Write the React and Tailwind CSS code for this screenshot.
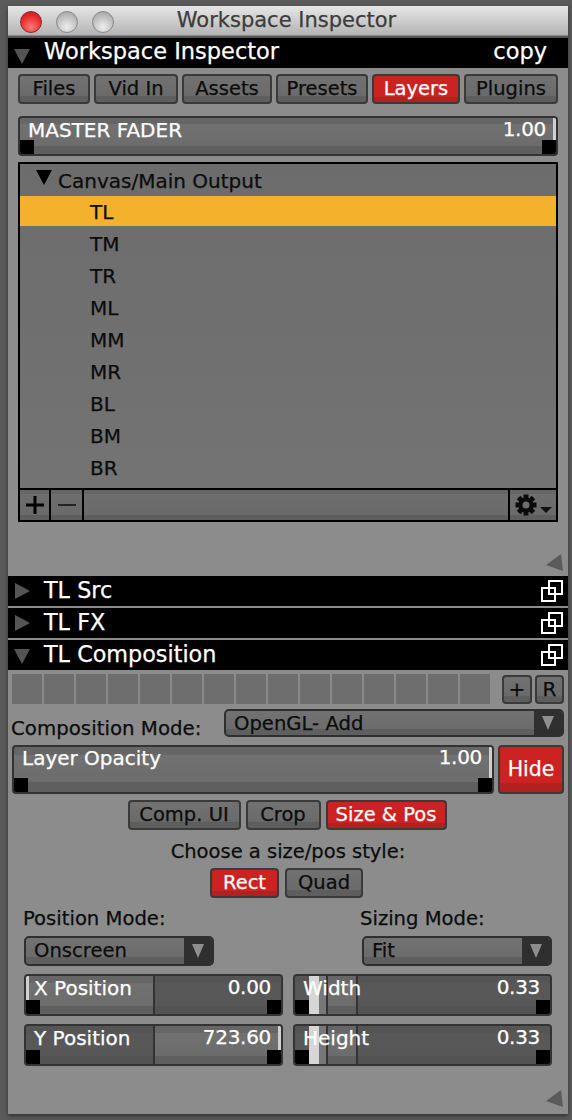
const font = { fontFamily: '"DejaVu Sans", sans-serif' };

function Btn({ children, w, red, h = "h-[30px]", text = "text-[19.5px]" }) {
  return (
    <div
      className={`${w} ${h} ${text} shrink-0 rounded-[4px] border-2 border-[#3a3a3a] flex items-center justify-center leading-none ${
        red
          ? "text-white bg-[linear-gradient(#cc2222_0%,#cc2222_80%,#b32020_80%,#b32020_100%)]"
          : "text-[#0c0c0c] bg-[linear-gradient(#727272_0%,#6a6a6a_78%,#5e5e5e_78%,#5e5e5e_100%)]"
      }`}
    >
      {children}
    </div>
  );
}

function Knob({ side }) {
  return <div className={`absolute bottom-0 ${side} w-[14px] h-[14px] bg-black`} />;
}

function Fader({ w, h, label, value, mark, raised, children }) {
  return (
    <div className={`${w} ${h} relative shrink-0 rounded-[4px] border-2 border-[#333] overflow-hidden bg-[linear-gradient(#666_0%,#666_18%,#717171_18%,#6c6c6c_78%,#5f5f5f_78%,#5f5f5f_100%)]`}>
      <div className="absolute inset-0 flex">{children}</div>
      <span className={`absolute left-[8px] text-white leading-[26px] text-[20px] ${raised ? "top-[-2px]" : "top-[-1px]"}`}>{label}</span>
      <span className={`absolute right-[10px] text-white leading-[26px] text-[20px] tracking-[-0.3px] ${raised ? "top-[-3px]" : "top-[-2px]"}`}>{value}</span>
      {mark === "right" && <div className="absolute right-0 top-0 w-[3px] bottom-[14px] bg-[#d0d0d0]" />}
      {mark === "left" && <div className="absolute left-0 top-0 w-[3px] bottom-[14px] bg-[#d0d0d0]" />}
      <Knob side="left-0" />
      <Knob side="right-0" />
    </div>
  );
}

function Select({ w, label, h = "h-[30px]" }) {
  return (
    <div className={`${w} ${h} shrink-0 rounded-[5px] border-2 border-[#2f2f2f] flex overflow-hidden bg-[linear-gradient(#727272_0%,#6c6c6c_75%,#5f5f5f_75%,#5f5f5f_100%)]`}>
      <div className="flex-1 pl-[8px] leading-[26px] text-[#0c0c0c] text-[19.6px]">{label}</div>
      <div className="w-[28px] bg-[#2f2f2f] flex items-center justify-center">
        <svg width="16" height="16" viewBox="0 0 16 16"><path d="M2 1H14L8 15Z" fill="#8e8e8e" /></svg>
      </div>
    </div>
  );
}

function Copy() {
  return (
    <svg width="22" height="22" viewBox="0 0 22 22" fill="none" stroke="white" strokeWidth="2">
      <rect x="8" y="1" width="13" height="13" />
      <rect x="1" y="8" width="13" height="13" />
    </svg>
  );
}

function Bar({ open, label }) {
  return (
    <div className="h-[30px] mb-[2px] bg-black flex items-center pl-[5px] pr-[5px]">
      <div className="w-[18px] h-[18px] flex items-center justify-center">
        {open ? (
          <svg width="18" height="18" viewBox="0 0 18 18"><path d="M1 3H17L9 18Z" fill="#555" /></svg>
        ) : (
          <svg width="18" height="18" viewBox="0 0 18 18"><path d="M2 1L17 9L2 17Z" fill="#555" /></svg>
        )}
      </div>
      <span className="ml-[13px] text-white text-[22.3px] leading-none flex-1 -mt-[2px]">{label}</span>
      <Copy />
    </div>
  );
}

function Corner() {
  return (
    <svg width="18" height="18" viewBox="0 0 18 18"><path d="M16 1L18 18L1 12Z" fill="#5b5b5b" /></svg>
  );
}

function Gear() {
  return (
    <svg width="22" height="22" viewBox="0 0 22 22">
      <g fill="#0a0a0a">
        {[0, 45, 90, 135].map((a) => (
          <rect key={a} x="8.5" y="0.5" width="5" height="21" transform={`rotate(${a} 11 11)`} />
        ))}
      </g>
      <circle cx="11" cy="11" r="7.5" fill="#0a0a0a" />
      <circle cx="11" cy="11" r="3.5" fill="#6c6c6c" />
    </svg>
  );
}

const rows = ["TM", "TR", "ML", "MM", "MR", "BL", "BM", "BR"];

export default function App() {
  return (
    <div style={font} className="w-[572px] h-[1120px] bg-[#5a5a5a] pt-[6px] pl-[8px] overflow-hidden [-webkit-text-stroke:0.25px]">
      <div className="w-[560px] h-[1108px] bg-[#8c8c8c] shadow-[0_2px_4px_#333]">
        {/* title bar */}
        <div className="h-[30px] relative flex items-center justify-center bg-[linear-gradient(#e6e6e6,#b4b4b4)] border-b border-[#8a8a8a] text-[#3c3c3c] text-[21px]">
          <div className="absolute left-[12px] top-[5px] flex gap-[14px]">
            <div className="w-[22px] h-[22px] rounded-full border border-[#8a2a2a] bg-[radial-gradient(circle_at_50%_75%,#ff7a7a,#e82a2a_60%,#b81818)]" />
            <div className="w-[22px] h-[22px] rounded-full border border-[#8a8a8a] bg-[radial-gradient(circle_at_50%_75%,#eeeeee,#bdbdbd_60%,#9a9a9a)]" />
            <div className="w-[22px] h-[22px] rounded-full border border-[#8a8a8a] bg-[radial-gradient(circle_at_50%_75%,#eeeeee,#bdbdbd_60%,#9a9a9a)]" />
          </div>
          <span className="pr-[3px] mt-[1px]">Workspace Inspector</span>
        </div>
        <div className="h-[2px] bg-[#555]" />
        {/* inspector header */}
        <div className="h-[30px] bg-black flex items-center pl-[5px] pr-[21px] text-white text-[22.5px]">
          <svg width="18" height="18" viewBox="0 0 18 18" className="mt-[3px]"><path d="M1 3H17L9 18Z" fill="#555" /></svg>
          <span className="ml-[13px] flex-1 leading-none -mt-[3px]">Workspace Inspector</span>
          <span className="leading-none -mt-[3px]">copy</span>
        </div>
        {/* tabs */}
        <div className="mt-[6px] pl-[10px] flex gap-[4px]">
          <Btn w="w-[72px]">Files</Btn>
          <Btn w="w-[84px]">Vid In</Btn>
          <Btn w="w-[90px]">Assets</Btn>
          <Btn w="w-[92px]">Presets</Btn>
          <Btn w="w-[88px]" red>Layers</Btn>
          <Btn w="w-[94px]">Plugins</Btn>
        </div>
        {/* master */}
        <div className="mt-[12px] pl-[10px]">
          <Fader w="w-[540px]" h="h-[40px]" label="MASTER FADER" value="1.00" mark="right" />
        </div>
        {/* list */}
        <div className="mt-[6px] ml-[10px] w-[540px] h-[360px] border-2 border-black bg-[linear-gradient(#6c6c6c,#747474)] flex flex-col text-[#0c0c0c] text-[20px]">
          <div className="h-[32px] flex items-center pl-[15px] shrink-0">
            <svg width="18" height="16" viewBox="0 0 18 16" className="-mt-[6px]"><path d="M1 1H17L9 16Z" fill="#000" /></svg>
            <span className="ml-[5px] mt-[2px]">Canvas/Main Output</span>
          </div>
          <div className="h-[30px] mb-[2px] bg-[#f4b22c] pl-[70px] leading-[32px] shrink-0">TL</div>
          {rows.map((r) => (
            <div key={r} className="h-[32px] pl-[70px] leading-[32px] shrink-0">{r}</div>
          ))}
          <div className="flex-1" />
          <div className="h-[32px] border-t-2 border-black flex bg-[linear-gradient(#666_0%,#666_12%,#6e6e6e_12%,#6a6a6a_85%,#5e5e5e_85%)] shrink-0">
            <div className="w-[31px] border-r-2 border-black flex items-center justify-center">
              <svg width="20" height="20" viewBox="0 0 20 20"><path d="M10 1V19M1 10H19" stroke="#000" strokeWidth="3" /></svg>
            </div>
            <div className="w-[33px] border-r-2 border-black flex items-center justify-center">
              <svg width="20" height="20" viewBox="0 0 20 20"><path d="M1 10H19" stroke="#222" strokeWidth="2" /></svg>
            </div>
            <div className="flex-1" />
            <div className="w-[48px] border-l-2 border-black flex items-center pl-[5px]">
              <Gear />
              <svg width="12" height="6" viewBox="0 0 12 6" className="ml-[3px] mt-[10px]"><path d="M0 0H12L6 6Z" fill="#111" /></svg>
            </div>
          </div>
        </div>
        <div className="h-[54px] flex justify-end items-end pr-[5px] pb-[5px]">
          <Corner />
        </div>
        <Bar label="TL Src" />
        <Bar label="TL FX" />
        <Bar open label="TL Composition" />
        {/* composition */}
        <div className="mt-[4px] pl-[4px] h-[30px] flex items-center">
          <div className="flex gap-[2px] w-[480px]">
            {Array.from({ length: 15 }, (_, i) => (
              <div key={i} className="w-[30px] h-[30px] shrink-0 bg-[#6e6e6e]" />
            ))}
          </div>
          <div className="ml-[10px] flex gap-[3px]">
            <Btn w="w-[30px]" h="h-[29px]" text="text-[20px]"><span className="-mt-[1px]">+</span></Btn>
            <Btn w="w-[29px]" h="h-[29px]" text="text-[20px]">R</Btn>
          </div>
        </div>
        <div className="mt-[5px] pl-[3px] flex items-center h-[28px]">
          <span className="w-[213px] text-[19.8px] text-[#0c0c0c] mt-[11px] leading-none">Composition Mode:</span>
          <Select w="w-[340px]" h="h-[28px]" label="OpenGL- Add" />
        </div>
        <div className="mt-[8px] pl-[4px] flex gap-[4px]">
          <Fader w="w-[482px]" h="h-[49px]" label="Layer Opacity" value="1.00" mark="right" raised />
          <Btn w="w-[66px]" h="h-[49px]" text="text-[20.5px]" red>Hide</Btn>
        </div>
        <div className="mt-[6px] flex gap-[5px] justify-center pr-[2px]">
          <Btn w="w-[113px]">Comp. UI</Btn>
          <Btn w="w-[75px]">Crop</Btn>
          <Btn w="w-[121px]" red>Size &amp; Pos</Btn>
        </div>
        <div className="mt-[8px] h-[28px] leading-[28px] text-center text-[19.5px] text-[#0c0c0c]">Choose a size/pos style:</div>
        <div className="mt-[2px] flex gap-[6px] justify-center pr-[3px]">
          <Btn w="w-[69px]" red>Rect</Btn>
          <Btn w="w-[78px]">Quad</Btn>
        </div>
        {/* position */}
        <div className="mt-[8px] pl-[15px] flex text-[19.6px] text-[#0c0c0c] h-[26px] leading-[26px]">
          <span className="w-[337px]">Position Mode:</span>
          <span>Sizing Mode:</span>
        </div>
        <div className="mt-[4px] pl-[16px] flex">
          <Select w="w-[190px]" label="Onscreen" />
          <div className="w-[148px]" />
          <Select w="w-[190px]" label="Fit" />
        </div>
        <div className="mt-[8px] pl-[16px] grid grid-cols-[259px_259px] gap-x-[10px] gap-y-[8px] w-fit">
          <Fader w="w-[259px]" h="h-[42px]" label="X Position" value="0.00" mark="left">
            <div className="w-[129px] border-r-2 border-[#333]" />
            <div className="flex-1 bg-[#4f4f4f]/70" />
          </Fader>
          <Fader w="w-[259px]" h="h-[42px]" label="Width" value="0.33">
            <div className="w-[14px] bg-[#4f4f4f]/70" />
            <div className="w-[10px] bg-[#d6d6d6]" />
            <div className="w-[7px] bg-[#777]" />
            <div className="w-[32px] border-x-2 border-[#333]" />
            <div className="flex-1 bg-[#4f4f4f]/70" />
          </Fader>
          <Fader w="w-[259px]" h="h-[42px]" label="Y Position" value="723.60" mark="right">
            <div className="w-[129px] border-r-2 border-[#333] bg-[#4f4f4f]/70" />
            <div className="flex-1" />
          </Fader>
          <Fader w="w-[259px]" h="h-[42px]" label="Height" value="0.33">
            <div className="w-[14px] bg-[#4f4f4f]/70" />
            <div className="w-[10px] bg-[#d6d6d6]" />
            <div className="w-[7px] bg-[#777]" />
            <div className="w-[32px] border-x-2 border-[#333]" />
            <div className="flex-1 bg-[#4f4f4f]/70" />
          </Fader>
        </div>
        <div className="mt-[23px] flex justify-end pr-[5px]">
          <Corner />
        </div>
      </div>
    </div>
  );
}
